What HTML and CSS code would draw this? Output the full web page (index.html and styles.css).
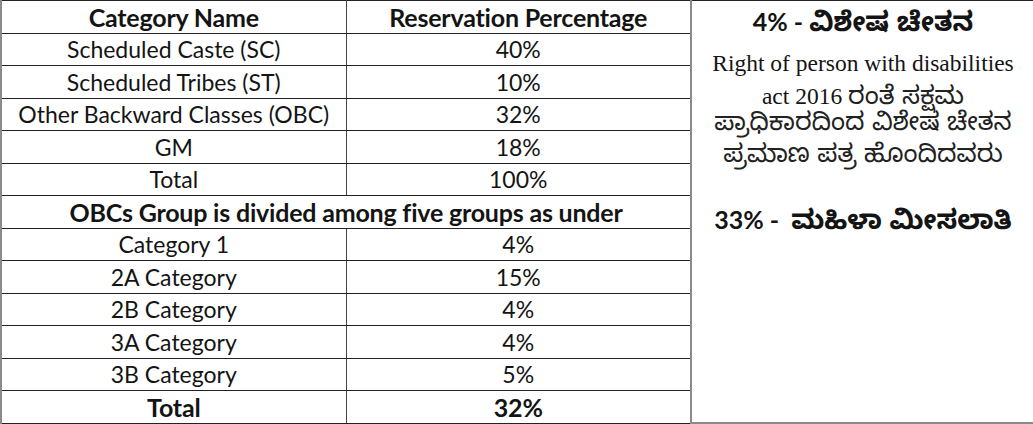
FILE: index.html
```html
<!DOCTYPE html>
<html lang="en">
<head>
<meta charset="utf-8">
<title>Reservation</title>
<link rel="stylesheet" href="styles.css">
</head>
<body>
<table class="res">
  <colgroup>
    <col class="c1"><col class="c2"><col class="c3">
  </colgroup>
  <tr class="hd">
    <th>Category Name</th>
    <th>Reservation Percentage</th>
    <td class="side" rowspan="13">
      <div class="side-in">
        <p class="kn-head">4% - <span class="knb">ವಿಶೇಷ ಚೇತನ</span></p>
        <div class="note">
          <div class="line serif">Right of person with disabilities</div>
          <div class="line"><span class="serif">act 2016</span> <span class="kn">ರಂತೆ ಸಕ್ಷಮ</span></div>
          <div class="line kn">ಪ್ರಾಧಿಕಾರದಿಂದ ವಿಶೇಷ ಚೇತನ</div>
          <div class="line kn">ಪ್ರಮಾಣ ಪತ್ರ ಹೊಂದಿದವರು</div>
        </div>
        <p class="kn-head women">33% -&nbsp; <span class="knb">ಮಹಿಳಾ ಮೀಸಲಾತಿ</span></p>
      </div>
    </td>
  </tr>
  <tr><td>Scheduled Caste (SC)</td><td>40%</td></tr>
  <tr><td>Scheduled Tribes (ST)</td><td>10%</td></tr>
  <tr><td>Other Backward Classes (OBC)</td><td>32%</td></tr>
  <tr><td>GM</td><td>18%</td></tr>
  <tr><td>Total</td><td>100%</td></tr>
  <tr class="hd"><th colspan="2">OBCs Group is divided among five groups as under</th></tr>
  <tr><td>Category 1</td><td>4%</td></tr>
  <tr><td>2A Category</td><td>15%</td></tr>
  <tr><td>2B Category</td><td>4%</td></tr>
  <tr><td>3A Category</td><td>4%</td></tr>
  <tr><td>3B Category</td><td>5%</td></tr>
  <tr class="hd"><th>Total</th><th>32%</th></tr>
</table>
</body>
</html>
```

FILE: styles.css
```css
html, body {
  margin: 0;
  padding: 0;
  background: #fff;
}

.res {
  border-collapse: collapse;
  table-layout: fixed;
  width: 1033px;
  font-family: "Lato", "Noto Sans Kannada", "Noto Sans", sans-serif;
  font-size: 23px;
  color: #141414;
}

.c1, .c2 { width: 345px; }
.c3 { width: 343px; }

.res th,
.res td {
  height: 31.5px;
  padding: 0;
  text-align: center;
  vertical-align: middle;
  border-top: 1px solid #222;
  border-bottom: 1px solid #222;
  border-right: 1px solid #444;
  line-height: 26px;
  white-space: nowrap;
}

.res tr > :first-child { border-left: 2px solid #8a8a8a; }

.res th {
  font-weight: 700;
  font-size: 25px;
  letter-spacing: -0.2px;
}

.res td.side {
  border-left: 2px solid #8a8a8a;
  border-right: none;
  border-bottom: 2px solid #8a8a8a;
  vertical-align: top;
  white-space: nowrap;
}

.side-in {
  padding: 4px 0 0;
  text-align: center;
}

.side p { margin: 0; }

.kn-head {
  font-family: "Lato", sans-serif;
  font-weight: 700;
  font-size: 25px;
  line-height: 32px;
  height: 32px;
}

.knb {
  font-family: "Noto Sans Kannada", "Noto Sans", sans-serif;
  font-size: 27px;
  font-weight: 700;
}

.note {
  margin-top: 10px;
}

.line {
  height: 32px;
  line-height: 32px;
}

.serif {
  font-family: "Liberation Serif", serif;
  font-size: 23.5px;
}

.kn {
  font-family: "Noto Sans Kannada", "Noto Sans", sans-serif;
  font-size: 25.5px;
  color: #222;
}

.women { margin-top: 28px !important; }
```
